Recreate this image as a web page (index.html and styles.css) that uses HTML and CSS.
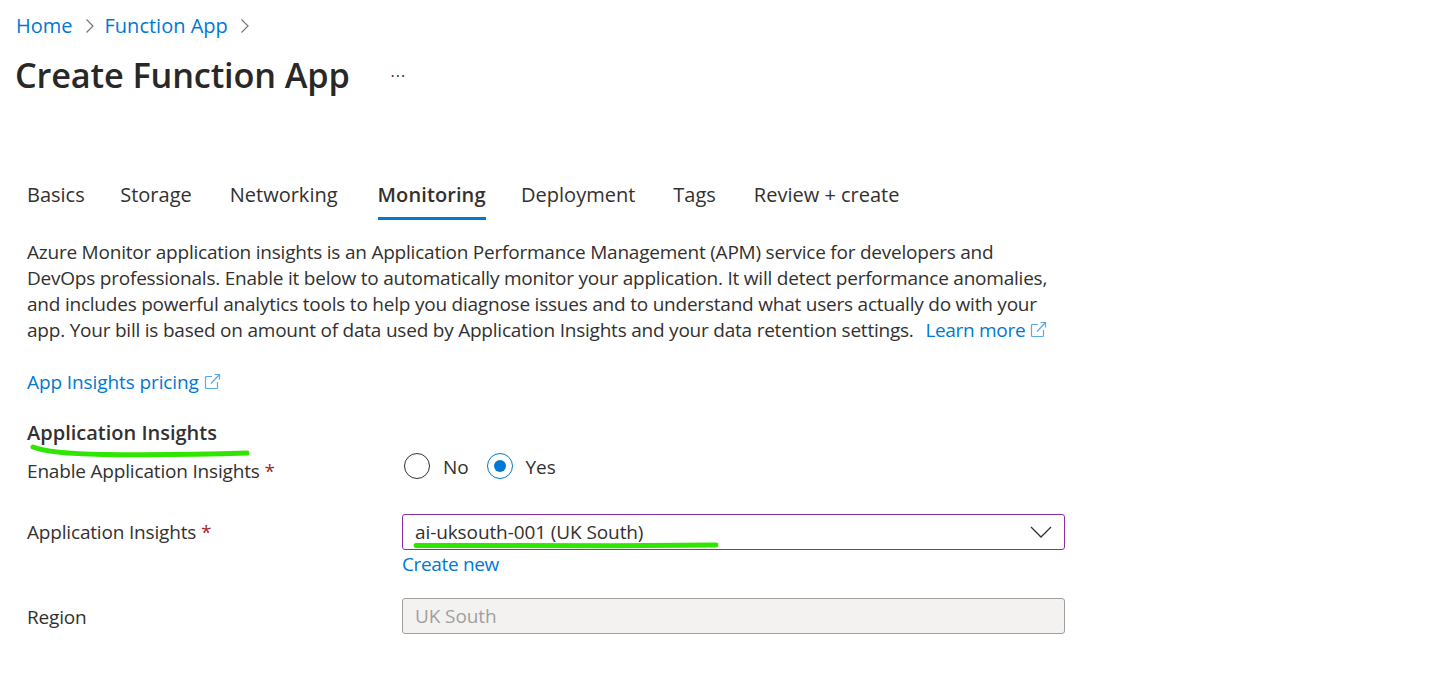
FILE: index.html
```html
<!DOCTYPE html>
<html lang="en">
  <head>
    <meta charset="UTF-8" />
    <meta name="viewport" content="width=device-width, initial-scale=1.0" />
    <title>Create Function App</title>
    <link rel="stylesheet" href="styles.css">
  </head>
  <body>
    <div class="page">
      <nav class="breadcrumb">
        <a class="link" href="#">Home</a>
        <svg class="crumb-sep" width="12" height="16" viewBox="0 0 12 16"><path d="M2.500 1.500 9 8l-6.500 6.500" /></svg>
        <a class="link" href="#">Function App</a>
        <svg class="crumb-sep" width="12" height="16" viewBox="0 0 12 16"><path d="M2.500 1.500 9 8l-6.500 6.500" /></svg>
      </nav>

      <div class="title-row">
        <h1>Create Function App</h1>
        <span class="more">...</span>
      </div>

      <div class="content">
        <div class="tabs">
          <span class="tab first">Basics</span>
          <span class="tab">Storage</span>
          <span class="tab">Networking</span>
          <span class="tab active">Monitoring</span>
          <span class="tab">Deployment</span>
          <span class="tab">Tags</span>
          <span class="tab">Review + create</span>
        </div>

        <p class="intro">
          Azure Monitor application insights is an Application Performance Management (APM) service for developers and<br>
          DevOps professionals. Enable it below to automatically monitor your application. It will detect performance anomalies,<br>
          and includes powerful analytics tools to help you diagnose issues and to understand what users actually do with your<br>
          app. Your bill is based on amount of data used by Application Insights and your data retention settings.
          <a class="link learn" href="#">Learn more
            <svg class="ext" width="17" height="17" viewBox="0 0 17 17"><path d="M8 3.500H2.500a1 1 0 0 0-1 1v10a1 1 0 0 0 1 1h10a1 1 0 0 0 1-1V9M7 10.500 15.500 1.500M10.500 1.500h5v5" /></svg>
          </a>
        </p>

        <p class="pricing">
          <a class="link" href="#">App Insights pricing
            <svg class="ext" width="17" height="17" viewBox="0 0 17 17"><path d="M8 3.500H2.500a1 1 0 0 0-1 1v10a1 1 0 0 0 1 1h10a1 1 0 0 0 1-1V9M7 10.500 15.500 1.500M10.500 1.500h5v5" /></svg>
          </a>
        </p>

        <h2>Application Insights</h2>

        <div class="form-row row-enable">
          <label>Enable Application Insights <span class="req">*</span></label>
          <div class="radios">
            <span class="radio"></span><span class="radio-text">No</span>
            <span class="radio checked"></span><span class="radio-text">Yes</span>
          </div>
        </div>

        <div class="form-row row-insights">
          <label>Application Insights <span class="req">*</span></label>
          <div class="field">
            <div class="select">
              <span>ai-uksouth-001 (UK South)</span>
              <svg width="22" height="12" viewBox="0 0 22 12"><path d="M1 1l10 10L21 1" /></svg>
            </div>
            <a class="link create" href="#">Create new</a>
          </div>
        </div>

        <div class="form-row row-region">
          <label>Region</label>
          <div class="field">
            <div class="input-disabled">UK South</div>
          </div>
        </div>
      </div>

      <!-- green marker strokes drawn on top of the screenshot -->
      <svg class="marker" width="1434" height="691" viewBox="0 0 1434 691">
        <path d="M33 447c12 5 40 7 70 7.500 50 .5 100 0 144-1.500" />
        <path d="M416 545.500c90 .5 200 .5 300-.5" />
      </svg>
    </div>
  </body>
</html>
```

FILE: styles.css
```css
body {
  font-family: "Open Sans", "Noto Sans", sans-serif;
  background-color: #fff;
  color: #323130;
  margin: 0;
  font-size: 19px;
  letter-spacing: -0.1px;
}

.page {
  position: relative;
  width: 1434px;
  height: 691px;
  overflow: hidden;
}

.link {
  color: #0078d4;
  text-decoration: none;
}

.breadcrumb {
  display: flex;
  align-items: center;
  gap: 11px;
  padding: 12px 0 0 16px;
  height: 27px;
  font-size: 20px;
  letter-spacing: 0;
}

.crumb-sep {
  margin-right: -2px;
}

.crumb-sep path {
  fill: none;
  stroke: #797775;
  stroke-width: 1.200;
}

.title-row {
  display: flex;
  align-items: center;
  padding: 10px 0 0 15px;
  height: 51px;
}

h1 {
  margin: 0;
  font-size: 34.300px;
  font-weight: 600;
  color: #292827;
  letter-spacing: -0.15px;
}

.more {
  margin: -7px 0 0 41px;
  font-size: 16px;
  letter-spacing: 1px;
}

.content {
  padding: 76px 0 0 27px;
}

.tabs {
  display: flex;
  gap: 38px;
  font-size: 20px;
  letter-spacing: 0;
}

.tab {
  height: 44px;
  line-height: 38px;
  box-sizing: border-box;
}

.tab.first {
  margin-right: -2.500px;
}

.tab.active {
  margin: 0 -2.500px 0 2px;
  font-weight: 600;
  letter-spacing: 0.1px;
  border-bottom: 3px solid #0078d4;
}

.intro {
  margin: 19px 0 0;
  line-height: 26px;
  letter-spacing: -0.22px;
}

.learn {
  margin-left: 7px;
  letter-spacing: -0.3px;
}

.ext {
  vertical-align: -1px;
}

.ext path {
  fill: none;
  stroke: #5aa9e4;
  stroke-width: 1.200;
}

.pricing {
  margin: 26px 0 0;
  line-height: 26px;
}

h2 {
  margin: 25px 0 0;
  font-size: 20px;
  line-height: 26px;
  font-weight: 600;
  letter-spacing: 0;
}

.form-row {
  display: grid;
  grid-template-columns: 375px 663px;
}

.form-row label {
  letter-spacing: -0.18px;
}

.row-enable {
  margin-top: 12px;
  height: 44px;
  line-height: 26px;
}

.row-insights {
  margin-top: 12px;
}

.row-insights label {
  line-height: 36px;
}

.row-region {
  margin-top: 20px;
}

.row-region label {
  line-height: 38px;
}

.req {
  color: #a4262c;
}

.radios {
  display: flex;
  align-items: center;
  height: 26px;
  margin: -5px 0 0 2px;
}

.radio {
  width: 24px;
  height: 24px;
  border: 1px solid #323130;
  border-radius: 50%;
  background-color: #fff;
  position: relative;
}

.radio.checked {
  border-color: #0078d4;
}

.radio.checked::after {
  content: "";
  position: absolute;
  left: 6px;
  top: 6px;
  width: 12px;
  height: 12px;
  border-radius: 50%;
  background-color: #0078d4;
}

.radio-text {
  margin: 2px 18px 0 13px;
}

.select,
.input-disabled {
  box-sizing: border-box;
  height: 36px;
  border-radius: 3px;
  padding: 0 12px;
  line-height: 34px;
}

.select {
  display: flex;
  justify-content: space-between;
  align-items: center;
  border: 1px solid #8a2da5;
}

.select svg path {
  fill: none;
  stroke: #323130;
  stroke-width: 1.300;
}

.create {
  display: block;
  line-height: 28px;
  letter-spacing: -0.35px;
}

.input-disabled {
  border: 1px solid #a19f9d;
  background-color: #f3f2f1;
  color: #a19f9d;
}

.marker {
  position: absolute;
  left: 0;
  top: 0;
  pointer-events: none;
}

.marker path {
  fill: none;
  stroke: #2ee600;
  stroke-width: 5;
  stroke-linecap: round;
}
```
